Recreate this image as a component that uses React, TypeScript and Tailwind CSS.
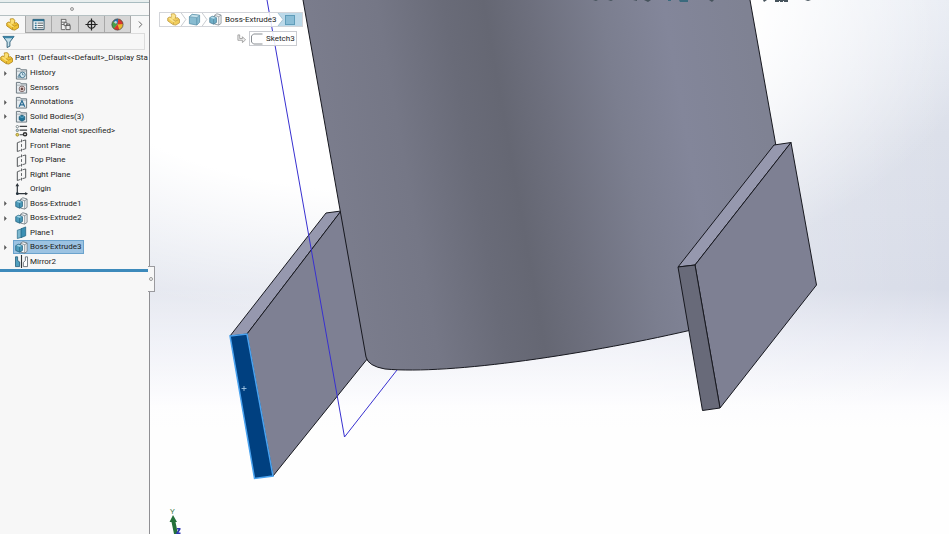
import type { ReactNode } from 'react';
import { ChevronRight } from 'lucide-react';

type IconName =
  | 'part'
  | 'history'
  | 'sensors'
  | 'annotations'
  | 'bodies'
  | 'material'
  | 'plane'
  | 'origin'
  | 'extrude'
  | 'refPlane'
  | 'mirror';

interface TreeNode {
  label: string;
  icon: IconName;
  expandable?: boolean;
  selected?: boolean;
}

const TREE: TreeNode[] = [
  { label: 'History', icon: 'history', expandable: true },
  { label: 'Sensors', icon: 'sensors' },
  { label: 'Annotations', icon: 'annotations', expandable: true },
  { label: 'Solid Bodies(3)', icon: 'bodies', expandable: true },
  { label: 'Material <not specified>', icon: 'material' },
  { label: 'Front Plane', icon: 'plane' },
  { label: 'Top Plane', icon: 'plane' },
  { label: 'Right Plane', icon: 'plane' },
  { label: 'Origin', icon: 'origin' },
  { label: 'Boss-Extrude1', icon: 'extrude', expandable: true },
  { label: 'Boss-Extrude2', icon: 'extrude', expandable: true },
  { label: 'Plane1', icon: 'refPlane' },
  { label: 'Boss-Extrude3', icon: 'extrude', expandable: true, selected: true },
  { label: 'Mirror2', icon: 'mirror' },
];

function Folder({ children }: { children: ReactNode }) {
  return (
    <>
      <path d="M1.5 13V1.5h4l1 1.5h6v10z" fill="#e4eaee" stroke="#66727a" />
      <path d="M1.5 4.5h11" stroke="#8a949b" strokeWidth=".7" />
      {children}
    </>
  );
}

const ICONS: Record<IconName, ReactNode> = {
  part: (
    <>
      <path
        d="M4.500 1 8 .8l1.500 2L9 5.500l2.500-.5L13.500 7v3.500L9.500 13 6.500 12.500.8 8.500V5.500L3 4.300l1.500.7L4.800 3z"
        fill="#efc235"
        stroke="#b08419"
        strokeWidth=".9"
        strokeLinejoin="round"
      />
      <path d="m5 1.500 2.500-.2L9 3 8.300 5.700 6.200 7 5 5.500zM1.500 6l2-1L9 8.800 7 10z" fill="#fbdf74" />
      <path d="M7 10v2.300M9 8.800l4-1.800M6.200 7 9 8.800" fill="none" stroke="#b08419" strokeWidth=".7" />
    </>
  ),
  history: (
    <Folder>
      <circle cx="8" cy="8.500" r="3" fill="#d7ebf5" stroke="#3f7089" />
      <path d="M8 6.500v2h1.500M3 11l1.500-3L6 11z" fill="none" stroke="#3f7089" strokeWidth=".8" />
    </Folder>
  ),
  sensors: (
    <Folder>
      <circle cx="7.500" cy="8.500" r="3" fill="#f4f4f4" stroke="#7c6464" />
      <path d="m7.500 6.500 2 2-2 2-2-2z" fill="#8e5450" />
      <circle cx="7.500" cy="8.500" r=".8" fill="#333" />
    </Folder>
  ),
  annotations: (
    <Folder>
      <path d="m4.500 11.500 3-6.500 3 6.500M5.500 9.500h4" fill="none" stroke="#286b92" strokeWidth="1.300" />
    </Folder>
  ),
  bodies: (
    <Folder>
      <path d="m4.500 7 3-1.500 3 1.500v3.500l-3 1.500-3-1.500z" fill="#217398" stroke="#104d6b" strokeWidth=".7" />
      <path d="m5 7 2.500 1L10 7" fill="none" stroke="#8acbe4" strokeWidth=".7" />
    </Folder>
  ),
  material: (
    <>
      <path d="M5 1.500h8M5 5.500h8M5 10.500h4" stroke="#3b3f42" strokeWidth="1.300" />
      <circle cx="2.500" cy="1.800" r="1.300" fill="#fff" stroke="#5c6c72" strokeWidth=".8" />
      <circle cx="2.500" cy="5.800" r="1.300" fill="#bcdbe6" stroke="#5c6c72" strokeWidth=".8" />
      <circle cx="2.500" cy="10.500" r="1.500" fill="#e5d260" stroke="#8d7a1c" strokeWidth=".8" />
      <circle cx="10.800" cy="10" r="1.700" fill="#fff" stroke="#333" strokeWidth="1.600" />
    </>
  ),
  plane: (
    <>
      <path d="M2.500 4v9.500M11.500 1v9.500" stroke="#55595c" strokeWidth="1.100" />
      <path d="M2.500 4 6 2.800M8 2l3.500-1M2.500 13.500 6 12.200M8 11.500l3.500-1" stroke="#55595c" />
      <path d="M7 .5v3M7 5.500v3M7 10.500v3" stroke="#55595c" />
    </>
  ),
  origin: (
    <>
      <path d="M2.500 2v9.500H13" fill="none" stroke="#2f363c" strokeWidth="1.300" />
      <path d="M2.500 0 .5 3.500h4zM14 11.500 11 9.700v3.600z" fill="#2f363c" />
      <circle cx="2.500" cy="11.500" r="1.500" fill="#26343f" />
    </>
  ),
  extrude: (
    <>
      <path d="M6 2.500 8.500.8l4.500 1.400v9L10.500 13 6 12z" fill="#f4f6f7" stroke="#6b767d" strokeWidth=".9" />
      <path d="M10.500 4v9M6 2.500 10.500 4 13 2.200" fill="none" stroke="#6b767d" strokeWidth=".8" />
      <path d="M.8 5 3.800 3.500 8 5v5.200L5 12 .8 10.200z" fill="#4c9cbb" stroke="#2a6784" strokeWidth=".9" />
      <path d="m1.500 5.200 2.300-1.100L7.300 5.200 5 6.300z" fill="#a8d8e9" />
      <path d="M5 6.500V12" stroke="#2a6784" strokeWidth=".8" />
    </>
  ),
  refPlane: (
    <>
      <path d="m2.500 4.500 5-1.500v9l-5 1.500z" fill="#7db9d0" stroke="#2b6d8b" strokeWidth=".8" />
      <path d="m6.500 3 5-2v9.500l-5 2z" fill="#3b8fb3" stroke="#1f617f" strokeWidth=".8" />
    </>
  ),
  mirror: (
    <>
      <path d="M.5 2v10.500h4.500V7.500L2.800 6V2z" fill="#4f9fbe" stroke="#265f7b" strokeWidth=".9" />
      <path d="M7 0v14" stroke="#303538" strokeWidth="1.200" />
      <path d="M13.500 2v10.500H9V8l2.200-2V2z" fill="#fff" stroke="#59636a" strokeWidth=".9" />
    </>
  ),
};

function TreeIcon({ name, className = 'size-[13px]' }: { name: IconName; className?: string }) {
  return (
    <svg viewBox="0 0 14 14" className={`${className} shrink-0`} aria-hidden="true">
      {ICONS[name]}
    </svg>
  );
}

const TABS: { label: string; icon: ReactNode }[] = [
  { label: 'Feature tree', icon: <TreeIcon name="part" /> },
  {
    label: 'Properties',
    icon: (
      <svg viewBox="0 0 14 14" className="size-[13px]" aria-hidden="true">
        <path d="M1 1.500h12v11H1z" fill="#f7fafb" stroke="#2c5266" />
        <path d="M1 2.500h12" stroke="#287194" strokeWidth="2" />
        <path d="M3 5.500h2M3 8h2M3 10.500h2" stroke="#287194" strokeWidth="1.500" />
        <path d="M6 5.500h6M6 8h6M6 10.500h6" stroke="#4b5459" />
      </svg>
    ),
  },
  {
    label: 'Configurations',
    icon: (
      <svg viewBox="0 0 14 14" className="size-[13px]" aria-hidden="true">
        <path d="M2.500 1v11.500h4M2.500 1.500h5v3h-5M2.500 7h4" fill="#f1f1f1" stroke="#666" />
        <path d="M5.500 5h3v3h-3z" fill="#fafafa" stroke="#666" />
        <path d="M7.500 8h4.500v4.500H7.500zM8.500 8V6.500h3V8" fill="#ececec" stroke="#555" />
      </svg>
    ),
  },
  {
    label: 'Dimensions',
    icon: (
      <svg viewBox="0 0 14 14" className="size-[13px]" aria-hidden="true">
        <circle cx="7" cy="7" r="4" fill="none" stroke="#222" strokeWidth="1.300" />
        <path d="M7 0.500v13M.5 7h13" stroke="#222" strokeWidth="1.300" />
      </svg>
    ),
  },
  {
    label: 'Appearances',
    icon: (
      <svg viewBox="0 0 14 14" className="size-[13px]" aria-hidden="true">
        <circle cx="7" cy="7" r="6" fill="#e9b92f" />
        <path d="M7 7 2 3.700A6 6 0 0 1 8 1z" fill="#2d76ae" />
        <path d="M7 7 8 1a6 6 0 0 1 5 5.500z" fill="#d8342c" />
        <path d="M7 7 2 3.700A6 6 0 0 0 3 11.500z" fill="#46a04a" />
        <path d="m7 7-4 4.500a6 6 0 0 0 6 1.200z" fill="#d8342c" />
        <circle cx="7" cy="7" r="6" fill="none" stroke="#4b4b4b" strokeWidth=".8" />
        <circle cx="5" cy="4.500" r="1.300" fill="#fff" opacity=".7" />
      </svg>
    ),
  },
];

function FeatureTree() {
  return (
    <aside className="relative z-10 flex w-[150px] shrink-0 flex-col border-r border-[#8f8f93] bg-[#f7f7f7]">
      <div className="h-[3px] border-b border-[#a9bcc0] bg-[#e8eeee]" />
      <div className="flex h-[13px] items-center justify-center border-b border-[#b5c0c2]">
        <span className="mr-[6px] size-1 rounded-full border border-[#999] bg-[#ddd]" />
      </div>

      <div className="flex h-[17px]">
        {TABS.map((tab, i) => (
          <button
            key={tab.label}
            aria-label={tab.label}
            className={`flex flex-1 items-center justify-center border-r border-[#a8a8a8] ${
              i === 0 ? 'bg-[#f7f7f7]' : 'border-b bg-[#d6d6d6]'
            }`}
          >
            {tab.icon}
          </button>
        ))}
        <button aria-label="More tabs" className="flex w-[18px] items-center justify-center text-[#555]">
          <ChevronRight className="size-[11px]" />
        </button>
      </div>

      <label className="mr-1 flex h-[17px] items-center border border-l-0 border-[#dcdcdc] pl-[2px]">
        <svg viewBox="0 0 14 14" className="size-[13px] shrink-0" aria-hidden="true">
          <path d="M1 1.500h12L8.500 7.500V12l-3 1.500v-6z" fill="#c4dfe9" stroke="#2b5c77" />
          <path d="M1 1.500h12l-1.500 2h-9z" fill="#3a86aa" />
        </svg>
        <input aria-label="Filter" className="min-w-0 flex-1 bg-transparent text-[8px] outline-none" />
      </label>

      <div className="flex h-4 items-center gap-[2px] whitespace-pre">
        <TreeIcon name="part" />
        <span>Part1  (Default&lt;&lt;Default&gt;_Display Sta</span>
      </div>

      <ul className="flex h-[203px] flex-col">
        {TREE.map((node) => (
          <li key={node.label} className="flex min-h-0 flex-1 items-center pl-1">
            <span className="flex w-[9px] shrink-0">
              {node.expandable && (
                <svg viewBox="0 0 3 6" className="h-[5px] w-[3px]" aria-hidden="true">
                  <path d="M0 0v6l3-3z" fill="#555" />
                </svg>
              )}
            </span>
            <button
              className={`flex h-[14px] items-center gap-[2px] whitespace-nowrap border px-[1px] ${
                node.selected ? 'border-[#6ba3cd] bg-[#9cc3e2]' : 'border-transparent'
              }`}
            >
              <TreeIcon name={node.icon} />
              {node.label}
            </button>
          </li>
        ))}
      </ul>
      <div className="mr-[1px] h-[3px] shrink-0 bg-[#3d8abb]" />

      <button
        aria-label="Collapse panel"
        className="absolute -right-[6px] top-[266px] flex h-[26px] w-[7px] items-center justify-center border border-l-0 border-[#9a9a9e] bg-[#f7f7f7]"
      >
        <span className="size-1 rounded-full border border-[#999]" />
      </button>
    </aside>
  );
}

function Breadcrumbs() {
  return (
    <nav aria-label="Selection" className="relative ml-[9px] mt-[12px] flex w-fit flex-col">
      <div className="flex h-[15px] items-center border border-[#d3d5da] bg-white/85">
        <a href="#part" aria-label="Part1" className="flex pl-[7px] opacity-80">
          <TreeIcon name="part" />
        </a>
        <Separator />
        <a href="#body" aria-label="Solid body" className="flex opacity-90">
          <svg viewBox="0 0 14 14" className="size-[13px]" aria-hidden="true">
            <path d="m1.500 4 3-2.500 8 1V10l-3 3-8-1.500z" fill="#7db5cd" stroke="#41819e" strokeWidth=".8" />
            <path d="m1.500 4 3-2.500 8 1L9.500 5z" fill="#c4e2ec" stroke="#41819e" strokeWidth=".6" />
            <path d="M9.500 5v8" stroke="#41819e" strokeWidth=".8" />
          </svg>
        </a>
        <Separator />
        <a href="#boss-extrude3" className="flex items-center gap-[3px]">
          <TreeIcon name="extrude" className="size-[13px] opacity-80" />
          Boss-Extrude3
        </a>
        <a href="#face" aria-label="Face" className="flex h-full items-center bg-[#bcd9e9] pr-[7px]">
          <svg viewBox="0 0 7 13" className="h-[13px] w-[7px]" aria-hidden="true">
            <path d="M0 0h1l5 6.500L1 13H0z" fill="#fff" />
            <path d="m1 0 5 6.500L1 13" fill="none" stroke="#a9c4d3" />
          </svg>
          <span className="ml-[1px] size-[10px] border border-[#5f9dba] bg-[#8abdd6]" />
        </a>
      </div>
      <div className="mt-[4px] flex h-[15px] items-center gap-[3px] pl-[78px]">
        <svg viewBox="0 0 10 10" className="size-[9px]" aria-hidden="true">
          <path d="M1 1h2v4h3V3l3.500 3.500L6 9.500V7H1z" fill="#eee" stroke="#8c8c8c" strokeWidth=".8" />
        </svg>
        <a href="#sketch3" className="flex h-full items-center gap-[3px] border border-[#c9cbd0] bg-white/90 px-[1px]">
          <svg viewBox="0 0 12 12" className="size-[12px]" aria-hidden="true">
            <path d="M11.500 1H2.500l-2 2v6l2 2h9" fill="none" stroke="#888d92" />
          </svg>
          Sketch3
        </a>
      </div>
    </nav>
  );
}

function Separator() {
  return (
    <svg viewBox="0 0 8 14" className="h-[13px] w-[8px]" aria-hidden="true">
      <path d="m1 0 5 7-5 7" fill="none" stroke="#c5c9cd" />
    </svg>
  );
}

function Model() {
  return (
    <svg
      viewBox="150 0 799 534"
      preserveAspectRatio="xMinYMin slice"
      className="absolute inset-0 size-full"
      role="img"
      aria-label="Cylinder with two fins"
    >
      <defs>
        <linearGradient id="sky" x1="0" y1="0" x2="0" y2="1">
          <stop offset="0" stopColor="#e6eaf2" />
          <stop offset=".25" stopColor="#dce0ea" />
          <stop offset=".54" stopColor="#d8dce8" />
          <stop offset=".64" stopColor="#e9ebf4" />
          <stop offset=".76" stopColor="#fcfcfe" />
          <stop offset=".8" stopColor="#fefefe" />
        </linearGradient>
        <linearGradient id="haze" x1="0" y1="0" x2="1" y2="0">
          <stop offset="0" stopColor="#ffffff" stopOpacity=".35" />
          <stop offset=".6" stopColor="#ffffff" stopOpacity=".35" />
          <stop offset="1" stopColor="#ffffff" stopOpacity="0" />
        </linearGradient>
        <radialGradient id="glow">
          <stop offset="0" stopColor="#ffffff" />
          <stop offset=".6" stopColor="#ffffff" />
          <stop offset="1" stopColor="#ffffff" stopOpacity="0" />
        </radialGradient>
        <linearGradient id="barrel" gradientUnits="userSpaceOnUse" x1="325" y1="170" x2="760" y2="93">
          <stop offset="0" stopColor="#7b7d8d" />
          <stop offset=".18" stopColor="#757786" />
          <stop offset=".33" stopColor="#696b78" />
          <stop offset=".42" stopColor="#656773" />
          <stop offset=".52" stopColor="#6d6f7d" />
          <stop offset=".68" stopColor="#7b7e8f" />
          <stop offset=".82" stopColor="#83869a" />
          <stop offset="1" stopColor="#7f8293" />
        </linearGradient>
      </defs>

      <rect x="150" width="799" height="534" fill="url(#sky)" />
      <rect x="150" width="799" height="534" fill="url(#haze)" />
      <ellipse cx="390" cy="0" rx="600" ry="320" fill="url(#glow)" />

      <g stroke="#17181f" strokeLinejoin="round">
        {/* left fin */}
        <path d="M326 213 341 211 247 334 230 336z" fill="#9698ae" />
        <path d="M341 211 247 334 273 476 368 358z" fill="#7e8093" />
        <path
          d="M303 0 366 357Q368 366 385 369C450 375 590 354 700 328L776 146 750 0z"
          fill="url(#barrel)"
          stroke="none"
        />
        <path d="M303 0 366 357Q368 366 385 369C450 375 590 354 700 328M776 146 750 0" fill="none" />
        {/* right fin */}
        <path d="M774 145 791 142.500 695 265 678 267z" fill="#9698ae" />
        <path d="M791 142.500 816.500 285 720 408 695 265z" fill="#7e8093" />
        <path d="M678 267 695 265 720 408 702.500 410.500z" fill="#686a79" />
      </g>

      <path d="M230 336 247 334 273 476 254.500 478.500z" fill="#004080" stroke="#4aa3f0" strokeWidth="1.500" />
      <path d="M244 386v5M241.500 388.500h5" stroke="#b5d4ee" strokeWidth=".8" />
      <path d="M267 0 344.500 437 397 370" fill="none" stroke="#3830d0" />

      {/* clipped view toolbar */}
      <g fill="#46535c">
        <path d="M593 0h5l-2 1zM608 0h5l-2 1zM633 0h4v1zM644 0h7l-3 2zM709 0h5l-2 2z" />
        <path d="M668 0h3v1h-3zM679 0h9v2h-8z" fill="#3b6a7d" />
        <path d="M763 0h4l-3 2zM775 0h13v2h-4V1h-1v1h-3V1h-1v1h-4zM805 0h6l-3 1z" />
      </g>

      {/* view triad */}
      <text x="170" y="514" fontSize="8" fill="#4e8154" fontFamily="Roboto, sans-serif">
        Y
      </text>
      <path d="m173 515-3.500 7h2l2.500 12h4l-2.500-12h1.500z" fill="#24713a" />
      <path d="m176 534 .5-1.500 2-3H177V528h3.500v1.500l-2 3h2V534z" fill="#2c37b0" />
    </svg>
  );
}

export default function App() {
  return (
    <div className="flex min-h-screen overflow-hidden bg-white font-[Roboto,'Noto_Sans',sans-serif] text-[8px] leading-[12px] text-[#1d1d1d]">
      <FeatureTree />
      <main className="relative min-w-0 flex-1 overflow-hidden">
        <Model />
        <Breadcrumbs />
      </main>
    </div>
  );
}
